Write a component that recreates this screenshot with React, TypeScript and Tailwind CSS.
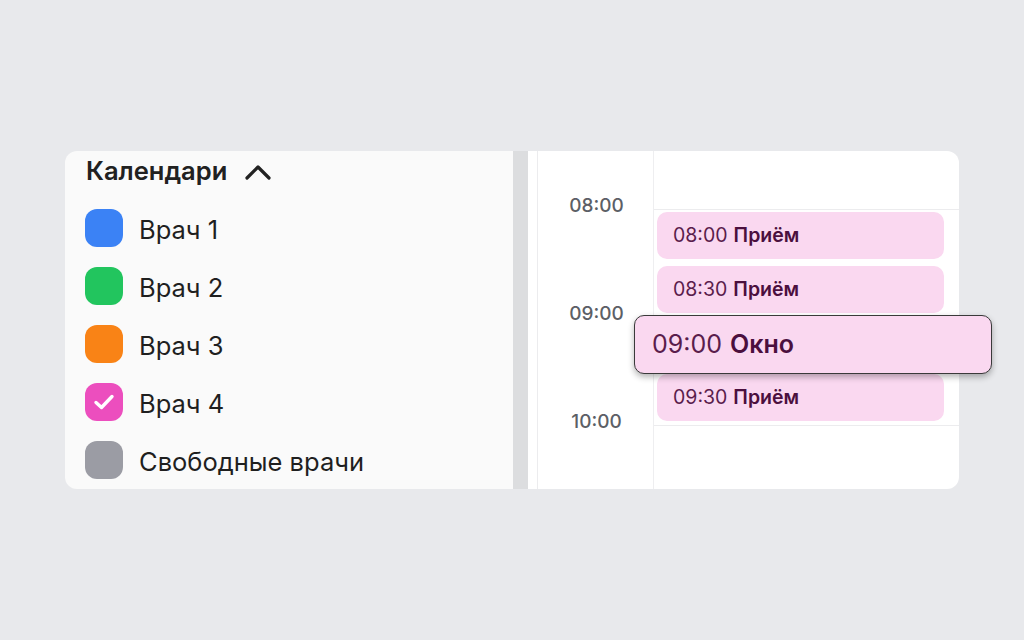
const doctors = [
  { name: "Врач 1", color: "bg-[#3b82f5]", checked: false },
  { name: "Врач 2", color: "bg-[#22c55e]", checked: false },
  { name: "Врач 3", color: "bg-[#f98316]", checked: false },
  { name: "Врач 4", color: "bg-[#ec4ebe]", checked: true },
  { name: "Свободные врачи", color: "bg-[#9b9ca4]", checked: false },
];

const Event = ({ time, label }: { time: string; label: string }) => (
  <div className="flex h-[47px] items-center rounded-[10px] bg-[#fad8f0] pl-4 text-[19.5px] text-[#5a1d4c]">
    <span>{time}</span>
    <span className="ml-[6px] font-semibold text-[#4b0f3e]">{label}</span>
  </div>
);

export default function App() {
  return (
    <div
      className="h-[640px] w-[1024px] bg-[#e8e9ec] pl-[65px] pt-[151px]"
      style={{ fontFamily: "Inter, 'Noto Sans', sans-serif" }}
    >
      <div className="relative flex h-[338px] w-[894px]">
        {/* calendars list */}
        <div className="flex w-[448px] flex-col rounded-l-xl bg-[#fafafa] pl-[20px]">
          <div className="flex h-[42px] items-center gap-[18px] pl-[1px]">
            <span className="text-[25.5px] font-semibold text-[#212121]">
              Календари
            </span>
            <svg width="26" height="16" viewBox="0 0 26 16" fill="none">
              <path
                d="M2 14 L13 3 L24 14"
                stroke="#222"
                strokeWidth="3.2"
                strokeLinecap="round"
                strokeLinejoin="round"
              />
            </svg>
          </div>
          <div className="mt-[7px] flex flex-col">
            {doctors.map((d) => (
              <div key={d.name} className="flex h-[58px] items-center gap-[16px]">
                <div
                  className={`flex h-[38px] w-[38px] items-center justify-center rounded-[12px] ${d.color}`}
                >
                  {d.checked && (
                    <svg width="22" height="18" viewBox="0 0 22 18" fill="none">
                      <path
                        d="M3 9.5 L8.5 14.5 L19 3.5"
                        stroke="#fff"
                        strokeWidth="3.4"
                        strokeLinecap="round"
                        strokeLinejoin="round"
                      />
                    </svg>
                  )}
                </div>
                <span className="pt-[4px] text-[25.5px] text-[#1f1f1f]">{d.name}</span>
              </div>
            ))}
          </div>
        </div>

        {/* divider */}
        <div className="w-[15px] bg-[#dcdddf]" />
        <div className="w-[9px] bg-white" />
        <div className="w-[1px] bg-[#ececee]" />

        {/* day grid */}
        <div className="flex flex-1 rounded-r-xl bg-white">
          <div className="flex w-[116px] flex-col border-r border-[#eeeef0]">
            {["08:00", "09:00", "10:00"].map((t) => (
              <div
                key={t}
                className="flex h-[108px] items-center justify-center pl-[2px] pt-[2px] text-[19px] font-medium text-[#5c5f66]"
              >
                {t}
              </div>
            ))}
          </div>
          <div className="flex flex-1 flex-col">
            <div className="h-[59px] border-b border-[#ececee]" />
            <div className="flex flex-col gap-[7px] pl-[3px] pr-[15px] pt-[2px]">
              <Event time="08:00" label="Приём" />
              <Event time="08:30" label="Приём" />
              <div className="h-[47px]" />
              <Event time="09:30" label="Приём" />
            </div>
            <div className="mt-[4px] border-b border-[#ececee]" />
          </div>
        </div>

        {/* dragged event */}
        <div className="absolute left-[569px] top-[164px] flex h-[59px] w-[358px] items-center rounded-[10px] border border-[#3a3a3a] bg-[#fad8f0] pl-[17px] text-[25px] text-[#5a1d4c] shadow-[0_3px_6px_rgba(0,0,0,0.3)]">
          <span>09:00</span>
          <span className="ml-[8px] font-semibold text-[#4b0f3e]">Окно</span>
        </div>
      </div>
    </div>
  );
}
